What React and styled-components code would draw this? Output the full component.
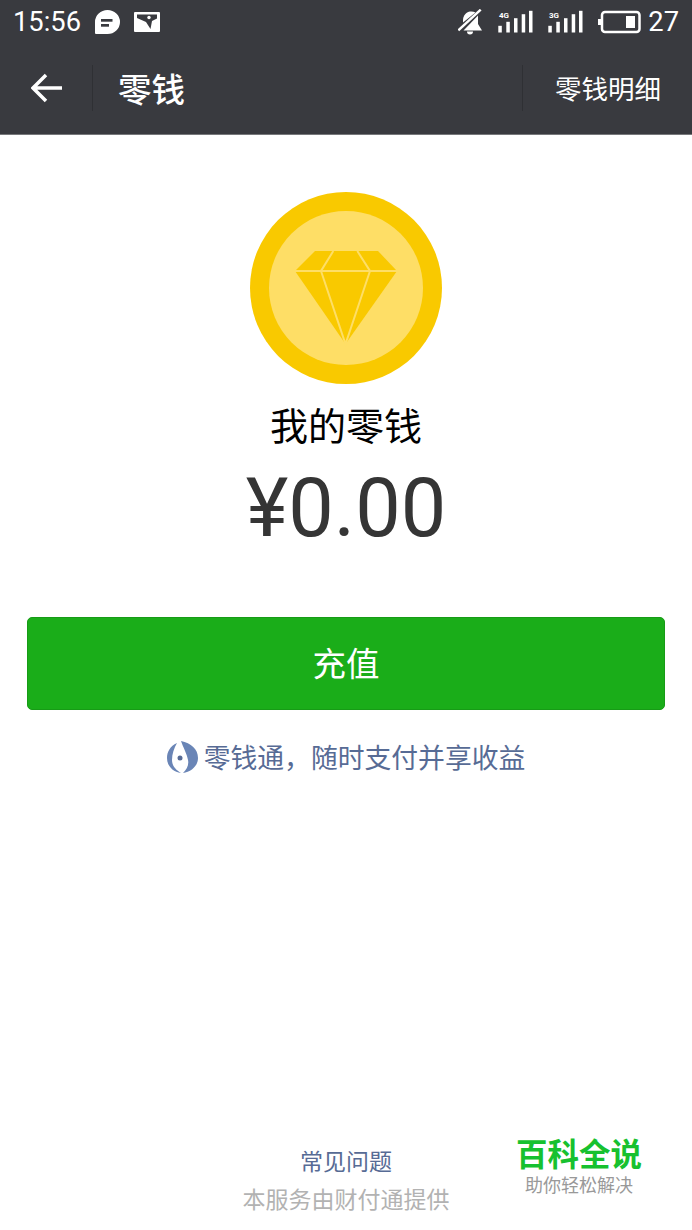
import React from 'react';
import styled, { createGlobalStyle } from 'styled-components';

const FONT = '"Roboto", "Noto Sans CJK SC", sans-serif';
const CJK = '"Noto Sans CJK SC", "Roboto", sans-serif';

const GlobalStyle = createGlobalStyle`
  html, body {
    margin: 0;
    padding: 0;
    background: #fff;
  }
`

const Page = styled.div`
  position: relative;
  width: 692px;
  height: 1230px;
  overflow: hidden;
  display: flex;
  flex-direction: column;
  background: #fff;
  font-family: ${CJK};
`

const Header = styled.header`
  height: 135px;
  flex: none;
  display: flex;
  flex-direction: column;
  box-sizing: border-box;
  background: #393a3f;
  border-bottom: 1px solid #77787b;
  color: #fff;
`

const StatusBar = styled.div`
  height: 43px;
  display: flex;
  align-items: center;
  justify-content: space-between;
  padding: 0 13px;
`

const StatusGroup = styled.div`
  display: flex;
  align-items: center;
  gap: ${(p) => p.$gap}px;
`

const StatusText = styled.span`
  font-family: ${FONT};
  font-size: 27.3px;
  line-height: 32px;
  color: #fff;
  margin-left: ${(p) => p.$ml || 0}px;
`

const NavBar = styled.div`
  flex: 1;
  display: flex;
  align-items: center;
  padding-left: 31px;
  padding-bottom: 2px;
`

const BackIcon = styled.svg`
  width: 32px;
  height: 30px;
  flex: none;
`

const Divider = styled.div`
  width: 1px;
  height: 46px;
  flex: none;
  background: #2f3034;
  margin: ${(p) => p.$margin};
`

const NavTitle = styled.div`
  flex: 1;
  font-size: 33.5px;
  line-height: 40px;
  font-weight: 500;
  color: #fff;
`

const NavAction = styled.div`
  font-size: 26.5px;
  line-height: 36px;
  color: #fff;
  margin-right: 31px;
`

const Main = styled.main`
  flex: 1;
  display: flex;
  flex-direction: column;
  align-items: center;
  padding-top: 57px;
`

const Coin = styled.svg`
  width: 192px;
  height: 192px;
  flex: none;
`

const BalanceLabel = styled.div`
  margin-top: 17px;
  font-size: 38px;
  line-height: 46px;
  color: #000;
`

const Amount = styled.div`
  margin-top: 16px;
  font-family: ${FONT};
  font-size: 81px;
  line-height: 92px;
  color: #353535;
`

const PrimaryButton = styled.button`
  margin-top: 62px;
  width: 638px;
  height: 93px;
  flex: none;
  border: 1px solid #179b16;
  border-radius: 5px;
  background: #1aad19;
  color: #fff;
  font-family: ${CJK};
  font-size: 33.5px;
  padding: 0 0 4px;
`

const LicaiLink = styled.div`
  margin-top: 28px;
  display: flex;
  align-items: center;
  gap: 6px;
  font-size: 26.8px;
  line-height: 38px;
  color: #576b95;
`

const Footer = styled.footer`
  display: flex;
  flex-direction: column;
  align-items: center;
  padding-bottom: 15px;
`

const FaqLink = styled.div`
  font-size: 23px;
  line-height: 34px;
  color: #576b95;
`

const Provider = styled.div`
  margin-top: 4px;
  font-size: 23px;
  line-height: 34px;
  color: #b2b2b2;
`

const Watermark = styled.div`
  position: absolute;
  left: 516px;
  top: 1135px;
  width: 126px;
  display: flex;
  flex-direction: column;
  align-items: center;
  background: #fff;
`

const WatermarkTitle = styled.div`
  font-size: 31.5px;
  line-height: 34px;
  font-weight: 700;
  color: #17c12f;
  white-space: nowrap;
`

const WatermarkSub = styled.div`
  margin-top: 3px;
  font-size: 18px;
  line-height: 24px;
  color: #999;
  white-space: nowrap;
`

const SignalIcon = ({ label }) => (
  <svg width="36" height="24" viewBox="0 0 36 24">
    <text x="1" y="7.5" fontSize="8" fontWeight="700" fontFamily="Roboto, sans-serif" fill="#fff">{label}</text>
    <rect x="0.3" y="15.8" width="3.5" height="6.7" fill="#fff" />
    <rect x="8.3" y="11.8" width="3.5" height="10.7" fill="#fff" />
    <rect x="16" y="8.2" width="3.5" height="14.3" fill="#fff" />
    <rect x="23.7" y="4.2" width="3.5" height="18.3" fill="#fff" />
    <rect x="31" y="0.8" width="3.5" height="21.7" fill="#fff" />
  </svg>
);

const App = () => {
  return (
    <Page>
      <GlobalStyle />
      <Header>
        <StatusBar>
          <StatusGroup $gap={14}>
            <StatusText>15:56</StatusText>
            <svg width="25" height="24" viewBox="0 0 25 24">
              <path d="M12.500 0a12.500 12 0 0 1 0 24H1a1 1 0 0 1-1-1V12A12.500 12 0 0 1 12.500 0z" fill="#fff" />
              <rect x="6" y="9" width="11.500" height="2.700" fill="#393a3f" />
              <rect x="6" y="14" width="8" height="2.700" fill="#393a3f" />
            </svg>
            <svg width="26" height="20" viewBox="0 0 26 20">
              <rect width="26" height="20" rx="1" fill="#fff" />
              <path d="M3 2.500h20v4l-5 2.500-1.500 8-4.500-7-9-4z" fill="#393a3f" />
              <circle cx="15" cy="5.500" r="1.700" fill="#fff" />
            </svg>
          </StatusGroup>
          <StatusGroup $gap={14}>
            <svg width="26" height="26" viewBox="0 0 26 26">
              <path d="M5 13.500V11C5 6 9 3 12 2.500c2-.3 4 .1 5.500 1z" fill="#fff" />
              <path d="M20 6.500V15l4 6.500H5.500z" fill="#fff" />
              <path d="M9 22.500h6a3 3 0 0 1-6 0z" fill="#fff" />
              <path d="M.3 21.300L22.700.7" stroke="#fff" strokeWidth="2.500" />
            </svg>
            <SignalIcon label="4G" />
            <SignalIcon label="3G" />
            <svg width="43" height="24" viewBox="0 0 43 24">
              <rect x="0" y="9" width="3" height="6" fill="#fff" />
              <rect x="4" y="2" width="37.500" height="20" rx="3" fill="none" stroke="#fff" strokeWidth="2.500" />
              <rect x="28" y="6" width="9" height="12" fill="#fff" />
            </svg>
            <StatusText $ml={-7}>27</StatusText>
          </StatusGroup>
        </StatusBar>
        <NavBar>
          <BackIcon viewBox="0 0 32 30">
            <path d="M31 15H3M15 2L2 15l13 13" fill="none" stroke="#fff" strokeWidth="3.500" />
          </BackIcon>
          <Divider $margin="0 25px 0 29px" />
          <NavTitle>零钱</NavTitle>
          <Divider $margin="0 32px 0 0" />
          <NavAction>零钱明细</NavAction>
        </NavBar>
      </Header>

      <Main>
        <Coin viewBox="0 0 192 192">
          <circle cx="96" cy="96" r="96" fill="#f9c900" />
          <circle cx="96" cy="96" r="77" fill="#fede66" />
          <path d="M65 59h63l19 20-51.500 73L45 79z" fill="#f9c900" />
          <path d="M45 79h102M83.300 59L71 79l24.500 73L120 79l-12.700-20" fill="none" stroke="#fede66" strokeWidth="2" />
        </Coin>
        <BalanceLabel>我的零钱</BalanceLabel>
        <Amount>¥0.00</Amount>
        <PrimaryButton>充值</PrimaryButton>
        <LicaiLink>
          <svg width="31" height="32" viewBox="0 0 31 32">
            <path d="M10 2C3 5 0 11 0 17c0 8 6 14 14 15-5-3-9-7-9-13C5 13 7 7 10 2z" fill="#6a85b6" />
            <path d="M14 0c10 2 17 8 17 17 0 8-7 14-15 15 4-4 6-8 5-13-1-6-5-13-7-19z" fill="#6a85b6" />
            <circle cx="13" cy="17" r="2.500" fill="#576b95" />
          </svg>
          零钱通，随时支付并享收益
        </LicaiLink>
      </Main>

      <Footer>
        <FaqLink>常见问题</FaqLink>
        <Provider>本服务由财付通提供</Provider>
      </Footer>

      <Watermark>
        <WatermarkTitle>百科全说</WatermarkTitle>
        <WatermarkSub>助你轻松解决</WatermarkSub>
      </Watermark>
    </Page>
  );
}

export default App;
